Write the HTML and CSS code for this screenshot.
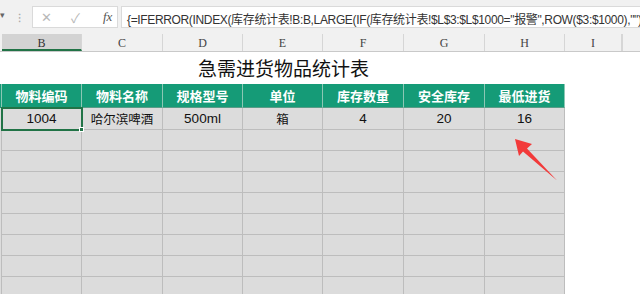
FILE: index.html
```html
<!DOCTYPE html>
<html lang="zh-CN">
<head>
<meta charset="UTF-8" />
<meta name="viewport" content="width=device-width, initial-scale=1.0">
<title>急需进货物品统计表</title>
<link rel="stylesheet" href="styles.css">
</head>
<body>

<div class="toolbar">
  <span class="caret">▾</span>
  <span class="grip">⁝</span>
  <div class="fxbox">
    <span class="btn">✕</span>
    <span class="btn">✓</span>
    <span class="fx">fx</span>
  </div>
  <div class="formula">{=IFERROR(INDEX(库存统计表!B:B,LARGE(IF(库存统计表!$L$3:$L$1000="报警",ROW($3:$1000),""),RO</div>
</div>

<div class="colhead">
  <span class="lead"></span>
  <span class="col w80 active">B</span>
  <span class="col w81">C</span>
  <span class="col w80">D</span>
  <span class="col w80">E</span>
  <span class="col w81">F</span>
  <span class="col w81">G</span>
  <span class="col w80">H</span>
  <span class="col w57">I</span>
  <span class="col"></span>
</div>

<div class="sheet">
  <div class="title-row">
    <span class="lead"></span>
    <div class="title">急需进货物品统计表</div>
  </div>

  <div class="row head">
    <span class="lead"></span>
    <span class="cell w80">物料编码</span>
    <span class="cell w81">物料名称</span>
    <span class="cell w80">规格型号</span>
    <span class="cell w80">单位</span>
    <span class="cell w81">库存数量</span>
    <span class="cell w81">安全库存</span>
    <span class="cell w80">最低进货</span>
  </div>

  <div class="row data">
    <span class="lead"></span>
    <span class="cell w80 sel">1004</span>
    <span class="cell w81 cjk">哈尔滨啤酒</span>
    <span class="cell w80">500ml</span>
    <span class="cell w80 cjk">箱</span>
    <span class="cell w81">4</span>
    <span class="cell w81">20</span>
    <span class="cell w80">16</span>
  </div>

  <div id="emptyRows"></div>
</div>

<svg class="arrow" width="640" height="294" viewBox="0 0 640 294">
  <polygon points="515,139 532,144 527,148.5 557,180.5 523,151.5 519,156" fill="#f23a3a"/>
</svg>

<script>
const emptyRows = document.getElementById('emptyRows');
const widths = [80, 81, 80, 80, 81, 81, 80];
for (let r = 0; r < 8; r++) {
  let row = document.createElement('div');
  row.className = 'row blank';
  row.innerHTML = '<span class="lead"></span>' +
    widths.map(w => `<span class="cell w${w}"></span>`).join('');
  emptyRows.appendChild(row);
}
</script>
</body>
</html>
```

FILE: styles.css
```css
body {
  margin: 0;
  padding: 0;
  width: 640px;
  height: 294px;
  overflow: hidden;
  background: #fff;
  font-family: "Liberation Sans", "Noto Sans CJK SC", sans-serif;
  color: #222;
  position: relative;
}
.toolbar {
  height: 34px;
  background: #f1f1f1;
  display: flex;
  align-items: flex-start;
  white-space: nowrap;
  overflow: hidden;
}
.caret {
  width: 8px;
  margin-top: 10px;
  font-size: 9px;
  color: #666;
}
.grip {
  margin: 9px 0 0 10px;
  width: 14px;
  font-size: 12px;
  color: #aaa;
}
.fxbox {
  margin-top: 6px;
  height: 22px;
  width: 86px;
  box-sizing: border-box;
  background: #fff;
  border: 1px solid #dadada;
  display: flex;
  align-items: center;
  padding-left: 8px;
}
.fxbox .btn {
  width: 30px;
  font-size: 13px;
  color: #b8b8b8;
}
.fxbox .fx {
  font-family: "Liberation Serif", serif;
  font-style: italic;
  font-size: 13px;
  color: #555;
  margin-left: 2px;
}
.formula {
  margin: 6px 0 0 3px;
  height: 22px;
  flex: 1;
  box-sizing: border-box;
  background: #fff;
  border: 1px solid #dadada;
  border-right: none;
  padding: 3px 0 0 5px;
  font-size: 12px;
  letter-spacing: -0.35px;
  color: #333;
  overflow: hidden;
}
.colhead {
  height: 18px;
  box-sizing: border-box;
  display: flex;
  background: #f1f1f1;
  border-bottom: 1px solid #c9c9c9;
  font-family: "Liberation Serif", serif;
  font-size: 12px;
  color: #444;
}
.lead {
  width: 2px;
  flex: none;
}
.col {
  box-sizing: border-box;
  border-right: 1px solid #d6d6d6;
  text-align: center;
  line-height: 17px;
  padding-top: 1px;
  flex: none;
}
.col.active {
  background: #d3d3d3;
  border-bottom: 2px solid #217346;
  color: #333;
}
.w80 { width: 80px; }
.w81 { width: 81px; }
.w57 { width: 57px; }

.title-row {
  height: 32px;
  display: flex;
}
.title {
  width: 563px;
  text-align: center;
  font-family: "Noto Sans CJK SC", sans-serif;
  font-size: 19px;
  line-height: 32px;
  color: #111;
}
.row {
  display: flex;
  width: 565px;
}
.row .lead {
  background: #dcdcdc;
  border-right: 1px solid #bdbdbd;
  width: 1px;
}
.cell {
  box-sizing: border-box;
  flex: none;
  border-right: 1px solid #bdbdbd;
  border-bottom: 1px solid #bdbdbd;
  text-align: center;
  font-size: 13px;
}
.head {
  height: 24px;
}
.head .lead {
  background: #159b77;
  border-right-color: #8cc7b4;
}
.head .cell {
  background: #159b77;
  color: #fff;
  font-weight: bold;
  font-family: "Noto Sans CJK SC", sans-serif;
  line-height: 23px;
  border-right-color: #8cc7b4;
  border-bottom-color: #5a9c87;
}
.data {
  height: 22px;
}
.data .cell,
.blank .cell {
  background: #dcdcdc;
}
.data .cell {
  line-height: 21px;
  font-size: 13.5px;
  color: #111;
}
.data .cjk {
  font-family: "Noto Sans CJK SC", sans-serif;
  font-size: 12.5px;
}
.blank {
  height: 21px;
}
.sel {
  position: relative;
  outline: 2px solid #217346;
  outline-offset: -1px;
}
.sel::after {
  content: "";
  position: absolute;
  right: -3px;
  bottom: -3px;
  width: 5px;
  height: 5px;
  background: #217346;
  border: 1px solid #fff;
  box-sizing: border-box;
}
.arrow {
  position: absolute;
  left: 0;
  top: 0;
  pointer-events: none;
}
```
